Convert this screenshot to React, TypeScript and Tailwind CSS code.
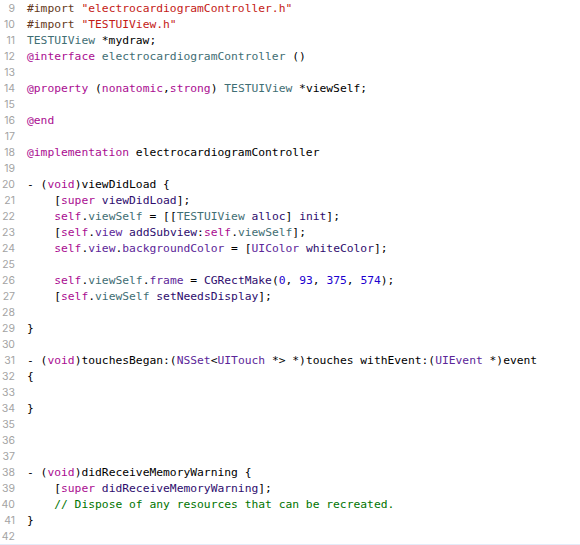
import React from 'react';

type Tok = [string, string?];

// xcode default light theme
const K = 'text-[#aa0d91]';
const S = 'text-[#c41a16]';
const P = 'text-[#643820]';
const T = 'text-[#3f6e74]';
const O = 'text-[#5c2699]';
const M = 'text-[#2e0d6e]';
const N = 'text-[#1c00cf]';
const C = 'text-[#007400]';

const lines: Tok[][] = [
  [['#import ', P], ['"electrocardiogramController.h"', S]],
  [['#import ', P], ['"TESTUIView.h"', S]],
  [['TESTUIView', T], [' *mydraw;']],
  [['@interface', K], [' '], ['electrocardiogramController', T], [' ()']],
  [],
  [['@property', K], [' ('], ['nonatomic', K], [','], ['strong', K], [') '], ['TESTUIView', T], [' *viewSelf;']],
  [],
  [['@end', K]],
  [],
  [['@implementation', K], [' electrocardiogramController']],
  [],
  [['- ('], ['void', K], [')viewDidLoad {']],
  [['    ['], ['super', K], [' '], ['viewDidLoad', M], ['];']],
  [['    '], ['self', K], ['.'], ['viewSelf', T], [' = [['], ['TESTUIView', T], [' '], ['alloc', M], ['] '], ['init', M], ['];']],
  [['    ['], ['self', K], ['.'], ['view', O], [' '], ['addSubview', M], [':'], ['self', K], ['.'], ['viewSelf', T], ['];']],
  [['    '], ['self', K], ['.'], ['view', O], ['.'], ['backgroundColor', O], [' = ['], ['UIColor', O], [' '], ['whiteColor', M], ['];']],
  [],
  [['    '], ['self', K], ['.'], ['viewSelf', T], ['.'], ['frame', O], [' = '], ['CGRectMake', M], ['('], ['0', N], [', '], ['93', N], [', '], ['375', N], [', '], ['574', N], [');']],
  [['    ['], ['self', K], ['.'], ['viewSelf', T], [' '], ['setNeedsDisplay', M], ['];']],
  [],
  [['}']],
  [],
  [['- ('], ['void', K], [')touchesBegan:('], ['NSSet', O], ['<'], ['UITouch', O], [' *> *)touches withEvent:('], ['UIEvent', O], [' *)event']],
  [['{']],
  [],
  [['}']],
  [],
  [],
  [],
  [['- ('], ['void', K], [')didReceiveMemoryWarning {']],
  [['    ['], ['super', K], [' '], ['didReceiveMemoryWarning', M], ['];']],
  [['    '], ['// Dispose of any resources that can be recreated.', C]],
  [['}']],
  [],
];

export default function App() {
  return (
    <div className="w-[580px] h-[545px] bg-white overflow-hidden border-b border-[#e4ebf8]">
      <div className="pt-px">
        {lines.map((toks, i) => (
          <div key={i} className="flex h-4 items-center">
            <span className="w-[15px] shrink-0 text-right text-[10.5px] text-[#a3a3a3] font-['Inter',sans-serif]">
              {i + 9}
            </span>
            <span className="ml-3 whitespace-pre text-[11.3px] text-black font-['DejaVu_Sans_Mono',monospace]">
              {toks.map(([t, c], j) => (
                <span key={j} className={c}>{t}</span>
              ))}
            </span>
          </div>
        ))}
      </div>
    </div>
  );
}
